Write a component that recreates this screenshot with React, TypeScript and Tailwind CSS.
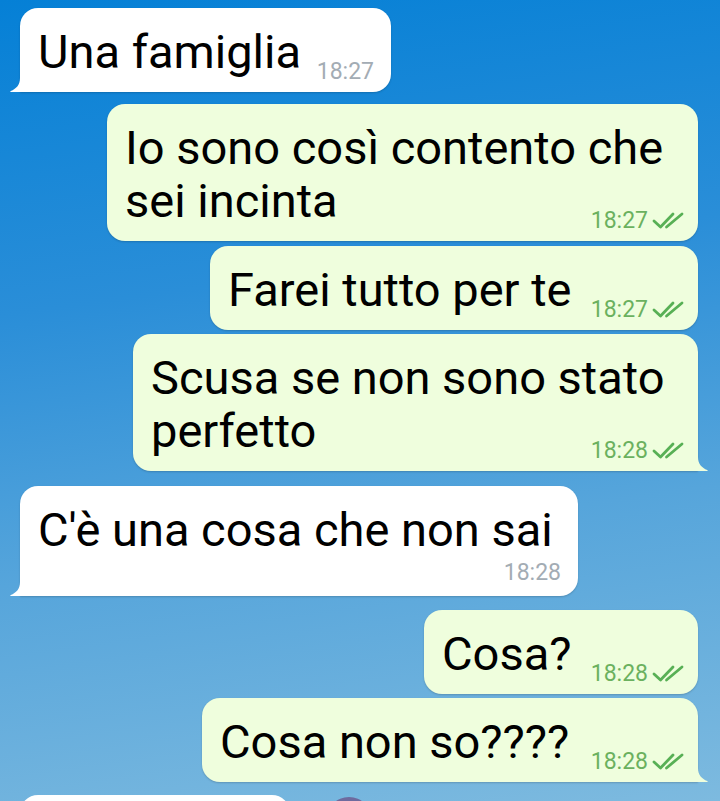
import React from "react";

type Msg = {
  out: boolean;
  w: string;
  gap: string;
  lines: string[];
  time: string;
  tail?: boolean;
  timeBelow?: boolean;
};

const messages: Msg[] = [
  { out: false, w: "w-[371px]", gap: "mt-[8px]", lines: ["Una famiglia"], time: "18:27", tail: true },
  { out: true, w: "w-[591px]", gap: "mt-[12px]", lines: ["Io sono così contento che", "sei incinta"], time: "18:27" },
  { out: true, w: "w-[488px]", gap: "mt-[5px]", lines: ["Farei tutto per te"], time: "18:27" },
  { out: true, w: "w-[565px]", gap: "mt-[4px]", lines: ["Scusa se non sono stato", "perfetto"], time: "18:28", tail: true },
  { out: false, w: "w-[558px]", gap: "mt-[15px]", lines: ["C'è una cosa che non sai"], time: "18:28", tail: true, timeBelow: true },
  { out: true, w: "w-[274px]", gap: "mt-[14px]", lines: ["Cosa?"], time: "18:28" },
  { out: true, w: "w-[496px]", gap: "mt-[4px]", lines: ["Cosa non so????"], time: "18:28", tail: true },
];

function Checks() {
  return (
    <svg width="33" height="17" viewBox="0 0 33 17" className="ml-[4px] mb-[1px]">
      <path d="M2 9 L8.5 15 L21 2" fill="none" stroke="#58b055" strokeWidth="2.8" strokeLinecap="round" strokeLinejoin="round" />
      <path d="M14.5 15 L30 2" fill="none" stroke="#58b055" strokeWidth="2.8" strokeLinecap="round" />
    </svg>
  );
}

function Tail({ out }: { out: boolean }) {
  return (
    <svg
      width="12"
      height="14"
      viewBox="0 0 12 14"
      className={out ? "absolute right-[-10px] bottom-0 -scale-x-100" : "absolute left-[-10px] bottom-0"}
    >
      <path
        d="M10 0 C10 7 6 11 0.8 13 C0 13.4 0.3 14 1 14 L12 14 L12 0 Z"
        fill={out ? "#effedd" : "#ffffff"}
      />
    </svg>
  );
}

function Time({ msg }: { msg: Msg }) {
  return (
    <div
      className={
        "flex items-center text-[23px] leading-[25px] whitespace-nowrap " +
        (msg.out ? "text-[#6bb15f]" : "text-[#a3acb4]")
      }
    >
      <span>{msg.time}</span>
      {msg.out && <Checks />}
    </div>
  );
}

function Bubble({ msg }: { msg: Msg }) {
  const rest = msg.lines.slice(0, -1);
  const last = msg.lines[msg.lines.length - 1];
  const corner = msg.tail ? (msg.out ? "rounded-br-none" : "rounded-bl-none") : "";
  return (
    <div
      className={
        "relative rounded-[18px] pl-[18px] pt-[17px] pb-[14px] text-black shadow-[0_1px_2px_rgba(0,0,0,0.18)] " +
        corner +
        " " +
        msg.w +
        " " +
        msg.gap +
        (msg.out ? " self-end mr-[22px] bg-[#effedd] pr-[13px]" : " ml-[20px] bg-white pr-[17px]")
      }
    >
      {rest.map((l) => (
        <div key={l} className="text-[47px] leading-[53px] whitespace-nowrap">
          {l}
        </div>
      ))}
      {msg.timeBelow ? (
        <>
          <div className="text-[47px] leading-[53px] whitespace-nowrap">{last}</div>
          <div className="flex justify-end h-[26px]">
            <div className="mt-[4px]">
              <Time msg={msg} />
            </div>
          </div>
        </>
      ) : (
        <div className="flex items-end justify-between">
          <div className="text-[47px] leading-[53px] whitespace-nowrap">{last}</div>
          <div className="mb-[-6px]">
            <Time msg={msg} />
          </div>
        </div>
      )}
      {msg.tail && <Tail out={msg.out} />}
    </div>
  );
}

export default function App() {
  return (
    <div
      className="h-[801px] w-[720px] overflow-hidden flex flex-col bg-[linear-gradient(172deg,#0580d6_0%,#2a8ed8_35%,#56a5db_65%,#7dbadf_100%)]"
      style={{ fontFamily: "Roboto, 'Noto Sans', sans-serif" }}
    >
      {messages.map((m, i) => (
        <Bubble key={i} msg={m} />
      ))}
      <div className="flex items-start mt-[13px] ml-[20px]">
        <div className="w-[270px] h-[60px] rounded-t-[18px] bg-white" />
        <div className="ml-[36px] mt-[2px] w-[46px] h-[46px] rounded-full bg-[#6e6a9e]" />
      </div>
    </div>
  );
}
